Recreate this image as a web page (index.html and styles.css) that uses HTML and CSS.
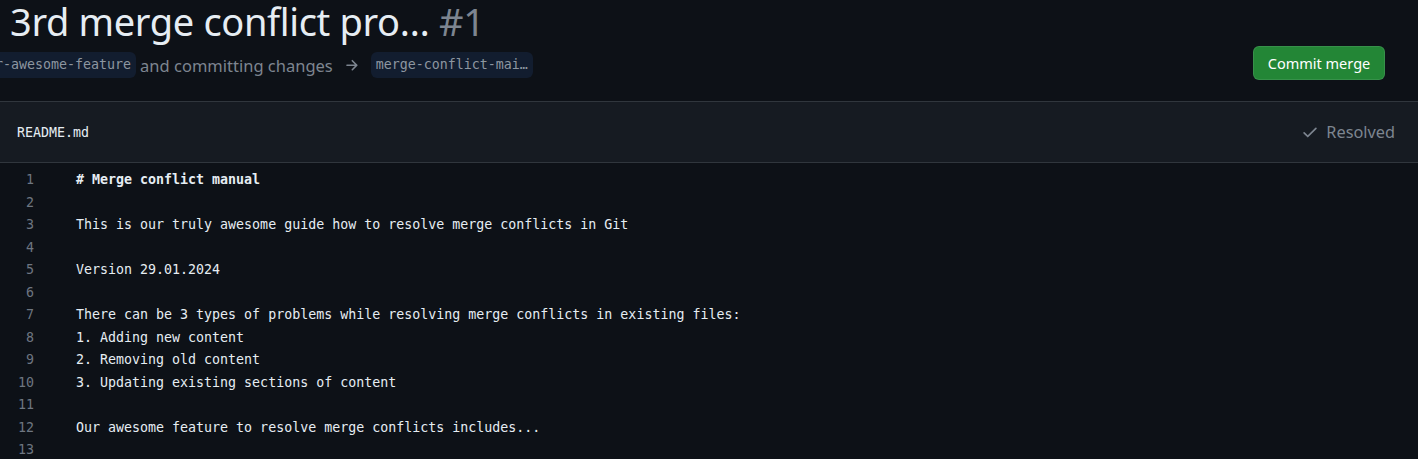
FILE: index.html
```html
<!DOCTYPE html>
<html lang="en">
<head>
<meta charset="utf-8">
<title>Resolve conflicts</title>
<link rel="stylesheet" href="styles.css">
</head>
<body>
<div class="page">
  <header class="pr-header">
    <h1 class="pr-title">3rd merge conflict pro… <span class="pr-number">#1</span></h1>
    <div class="pr-meta-row">
      <div class="pr-meta">
        <span class="ref ref-head">our-awesome-feature</span>
        <span class="meta-text">and committing changes</span>
        <span class="meta-arrow">
          <svg width="16" height="16" viewBox="0 0 16 16"><path fill="currentColor" d="M8.22 2.97a.75.75 0 0 1 1.06 0l4.250 4.25a.75.75 0 0 1 0 1.06l-4.25 4.25a.751.751 0 0 1-1.042-.018.751.751 0 0 1-.018-1.042l2.970-2.97H3.75a.75.75 0 0 1 0-1.5h7.44L8.22 4.03a.75.75 0 0 1 0-1.06Z"/></svg>
        </span>
        <span class="ref">merge-conflict-mai…</span>
      </div>
      <button class="btn-primary" type="button">Commit merge</button>
    </div>
  </header>

  <section class="file">
    <div class="file-header">
      <span class="file-name">README.md</span>
      <span class="file-status">
        <svg width="16" height="16" viewBox="0 0 16 16"><path fill="currentColor" d="M13.78 4.22a.75.75 0 0 1 0 1.06l-7.25 7.25a.75.75 0 0 1-1.06 0L2.22 9.28a.751.751 0 0 1 .018-1.042.751.751 0 0 1 1.042-.018L6 10.94l6.72-6.72a.75.75 0 0 1 1.06 0Z"/></svg>
        Resolved
      </span>
    </div>
    <div class="code">
      <div class="line"><span class="num">1</span><span class="text bold"># Merge conflict manual</span></div>
      <div class="line"><span class="num">2</span><span class="text"></span></div>
      <div class="line"><span class="num">3</span><span class="text">This is our truly awesome guide how to resolve merge conflicts in Git</span></div>
      <div class="line"><span class="num">4</span><span class="text"></span></div>
      <div class="line"><span class="num">5</span><span class="text">Version 29.01.2024</span></div>
      <div class="line"><span class="num">6</span><span class="text"></span></div>
      <div class="line"><span class="num">7</span><span class="text">There can be 3 types of problems while resolving merge conflicts in existing files:</span></div>
      <div class="line"><span class="num">8</span><span class="text">1. Adding new content</span></div>
      <div class="line"><span class="num">9</span><span class="text">2. Removing old content</span></div>
      <div class="line"><span class="num">10</span><span class="text">3. Updating existing sections of content</span></div>
      <div class="line"><span class="num">11</span><span class="text"></span></div>
      <div class="line"><span class="num">12</span><span class="text">Our awesome feature to resolve merge conflicts includes...</span></div>
      <div class="line"><span class="num">13</span><span class="text"></span></div>
    </div>
  </section>
</div>
</body>
</html>
```

FILE: styles.css
```css
* { box-sizing: border-box; }
html, body {
  margin: 0;
  background: #0d1117;
  color: #e6edf3;
  font-family: "Noto Sans", "Open Sans", sans-serif;
  overflow: hidden;
}
.page { width: 1418px; height: 459px; overflow: hidden; }

.pr-header {
  display: flow-root;
  padding: 0 33px 0 8px;
  border-bottom: 1px solid #30363d;
  height: 102px;
}
.pr-title {
  margin: -3px 0 0 2px;
  font-weight: 400;
  font-size: 38px;
  line-height: 48px;
  color: #e6edf3;
  white-space: nowrap;
  letter-spacing: -0.35px;
}
.pr-number { color: #7d8590; }

.pr-meta-row {
  display: flex;
  align-items: center;
  justify-content: space-between;
  margin-top: 1px;
}
.pr-meta {
  display: flex;
  align-items: center;
  gap: 6px;
  margin-top: 4px;
  color: #7d8590;
  font-size: 16.5px;
}
.ref {
  font-family: "DejaVu Sans Mono", monospace;
  font-size: 13.3px;
  color: #8d96a0;
  background: #121d2f;
  border-radius: 6px;
  padding: 0 5px;
  height: 26px;
  line-height: 26px;
  white-space: nowrap;
}
.ref-head { margin-left: -34px; margin-right: -2px; }
.meta-arrow { display: inline-flex; margin: 0 5px 0 4px; }
.meta-arrow svg { width: 17px; height: 17px; }

.btn-primary {
  font-family: "Noto Sans", sans-serif;
  font-size: 14.5px;
  color: #ffffff;
  background: #238636;
  border: 1px solid rgba(240, 246, 252, 0.1);
  border-radius: 6px;
  width: 132px;
  height: 34px;
  padding: 0;
}

.file-header {
  display: flex;
  align-items: center;
  justify-content: space-between;
  height: 61px;
  padding: 0 23px 0 17px;
  background: #161b22;
  border-bottom: 1px solid #30363d;
}
.file-name {
  font-family: "DejaVu Sans Mono", monospace;
  font-size: 13.3px;
  color: #e6edf3;
}
.file-status {
  display: inline-flex;
  align-items: center;
  gap: 7px;
  color: #7d8590;
  font-size: 16.3px;
}
.file-status svg { width: 18px; height: 18px; }

.code {
  padding-top: 6px;
  font-family: "DejaVu Sans Mono", monospace;
  font-size: 13.3px;
}
.line {
  display: flex;
  height: 22.5px;
  line-height: 22.5px;
}
.num {
  width: 34px;
  text-align: right;
  color: #6e7681;
  flex: none;
}
.text {
  margin-left: 42px;
  white-space: pre;
  color: #e6edf3;
}
.bold { font-weight: 700; }
```
